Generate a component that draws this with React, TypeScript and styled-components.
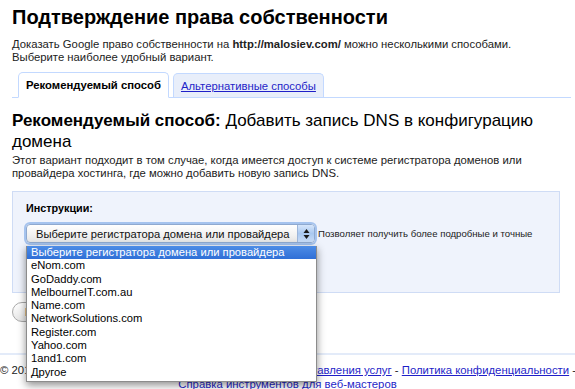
import styled, { createGlobalStyle } from 'styled-components'

const GlobalStyle = createGlobalStyle`
  html, body {
    margin: 0;
    padding: 0;
    background: #fff;
  }
  body {
    font-family: "Liberation Sans", Arial, sans-serif;
    color: #222;
    overflow: hidden;
  }
`

const Page = styled.div`
  width: 575px;
  height: 389px;
  overflow: hidden;
`

const Main = styled.div`
  padding: 0 15px 0 12px;
`

const Title = styled.h1`
  margin: 0;
  padding-top: 5px;
  font-size: 20px;
  line-height: 24px;
  font-weight: bold;
  color: #000;
`

const Intro = styled.p`
  margin: 9px 0 0;
  font-size: 11.3px;
  line-height: 13px;
`

const TabBar = styled.div`
  display: flex;
  align-items: flex-end;
  gap: 4px;
  margin: 8px -11px 0 0;
  padding-left: 6px;
  border-bottom: 1px solid #c3d9ff;
`

const Tab = styled.div<{ active?: boolean }>`
  box-sizing: border-box;
  height: ${({ active }) => (active ? '26px' : '24px')};
  padding: 0 7px;
  display: flex;
  align-items: center;
  border: 1px solid #c3d9ff;
  border-bottom: ${({ active }) => (active ? '1px solid #fff' : 'none')};
  margin-bottom: ${({ active }) => (active ? '-1px' : '0')};
  border-radius: 5px 5px 0 0;
  background: ${({ active }) => (active ? '#fff' : '#e8eefa')};
  font-size: 11.3px;
  font-weight: ${({ active }) => (active ? 'bold' : 'normal')};
  color: ${({ active }) => (active ? '#000' : '#1f1fc8')};
  text-decoration: ${({ active }) => (active ? 'none' : 'underline')};
`

const Heading = styled.h2`
  margin: 12px 0 0;
  font-size: 17px;
  line-height: 21px;
  font-weight: normal;
  color: #000;

  b {
    font-weight: bold;
  }
`

const Note = styled.p`
  margin: 2px 0 0;
  font-size: 11.3px;
  line-height: 13px;
`

const Panel = styled.div`
  position: relative;
  margin-top: 11px;
  padding: 10px 13px 0;
  height: 90px;
  background: #eff3fc;
  border: 1px solid #cfdcf5;
`

const Label = styled.div`
  font-size: 10.8px;
  line-height: 13px;
  font-weight: bold;
  color: #000;
`

const SelectRow = styled.div`
  display: flex;
  align-items: center;
  gap: 3px;
  margin-top: 9px;
`

const Select = styled.div`
  position: relative;
  width: 289px;
  height: 19px;
  box-sizing: border-box;
  display: flex;
  align-items: center;
  padding-left: 9px;
  border: 1px solid #8fa9cf;
  border-radius: 4px;
  background: linear-gradient(#ffffff, #f1f1f1 60%, #e4e4e4);
  box-shadow: 0 0 0 2px #a5c3ee;
  font-size: 11.2px;
  color: #111;
  white-space: nowrap;
`

const Stepper = styled.div`
  position: absolute;
  right: 0;
  top: 0;
  bottom: 0;
  width: 16px;
  border-left: 1px solid #9db6da;
  border-radius: 0 3px 3px 0;
  background: linear-gradient(#d6e6fb, #a9c8f0 50%, #c8dcf7);
  display: flex;
  align-items: center;
  justify-content: center;
`

const Hint = styled.span`
  font-size: 9.6px;
  color: #222;
  white-space: nowrap;
`

const Menu = styled.ul`
  position: absolute;
  left: 13px;
  top: 54px;
  width: 289px;
  margin: 0;
  padding: 0 0 2px;
  list-style: none;
  background: #fff;
  border: 1px solid #8c8c8c;
  border-top: none;
  box-shadow: 0 3px 8px rgba(0, 0, 0, 0.45);
  z-index: 5;
`

const MenuItem = styled.li<{ selected?: boolean }>`
  height: 13.3px;
  line-height: 13.3px;
  padding-left: 4px;
  font-size: 11.2px;
  color: ${({ selected }) => (selected ? '#fff' : '#000')};
  background: ${({ selected }) =>
    selected ? 'linear-gradient(#4d8ce6, #2f6fd6)' : 'transparent'};
  white-space: nowrap;
`

const Button = styled.div`
  display: inline-block;
  margin-top: 9px;
  height: 18px;
  padding: 0 12px;
  line-height: 18px;
  border: 1px solid #aaa;
  border-radius: 10px;
  background: linear-gradient(#fff, #e6e6e6);
  font-size: 11px;
  color: #000;
`

const Footer = styled.div`
  margin-top: 31px;
  border-top: 2px solid #e3ebf9;
  padding: 8px 0 0;
  text-align: center;
  font-size: 11.35px;
  line-height: 14px;
  color: #222;
  white-space: nowrap;

  a {
    color: #1f1fc8;
    text-decoration: underline;
  }
`

const options = [
  'eNom.com',
  'GoDaddy.com',
  'MelbourneIT.com.au',
  'Name.com',
  'NetworkSolutions.com',
  'Register.com',
  'Yahoo.com',
  '1and1.com',
  'Другое',
]

const Arrows = () => (
  <svg width="7" height="12" viewBox="0 0 7 12">
    <path d="M3.5 1 L6.5 5 L0.5 5 Z" fill="#1a1a1a" />
    <path d="M3.5 11 L6.5 7 L0.5 7 Z" fill="#1a1a1a" />
  </svg>
)

export default function App() {
  return (
    <Page>
      <GlobalStyle />
      <Main>
        <Title>Подтверждение права собственности</Title>
        <Intro>
          Доказать Google право собственности на <b>http://malosiev.com/</b> можно
          несколькими способами.
          <br />
          Выберите наиболее удобный вариант.
        </Intro>
        <TabBar>
          <Tab active>Рекомендуемый способ</Tab>
          <Tab>Альтернативные способы</Tab>
        </TabBar>
        <Heading>
          <b>Рекомендуемый способ:</b> Добавить запись DNS в конфигурацию домена
        </Heading>
        <Note>
          Этот вариант подходит в том случае, когда имеется доступ к системе
          регистратора доменов или провайдера хостинга, где можно добавить новую
          запись DNS.
        </Note>
        <Panel>
          <Label>Инструкции:</Label>
          <SelectRow>
            <Select>
              Выберите регистратора домена или провайдера
              <Stepper>
                <Arrows />
              </Stepper>
            </Select>
            <Hint>Позволяет получить более подробные и точные</Hint>
          </SelectRow>
          <Menu>
            <MenuItem selected>Выберите регистратора домена или провайдера</MenuItem>
            {options.map((o) => (
              <MenuItem key={o}>{o}</MenuItem>
            ))}
          </Menu>
        </Panel>
        <Button>Подтвердить</Button>
      </Main>
      <Footer>
        © 2011 Google - <a>Форум для веб-мастеров</a> -{' '}
        <a>Условия предоставления услуг</a> - <a>Политика конфиденциальности</a> -
        <br />
        <a>Справка инструментов для веб-мастеров</a>
      </Footer>
    </Page>
  )
}
